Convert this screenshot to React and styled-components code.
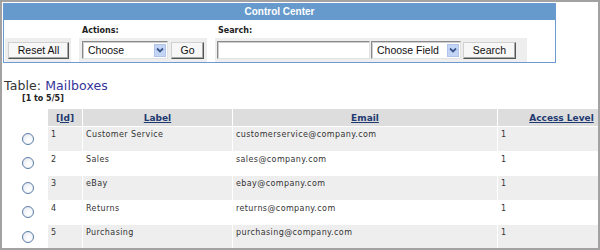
import React from "react";
import styled, { createGlobalStyle } from "styled-components";

const Global = createGlobalStyle`
  html, body { margin: 0; padding: 0; background: #fff; }
  body { font-family: "DejaVu Sans", Verdana, sans-serif; }
`;

const Frame = styled.div`
  width: 600px;
  height: 250px;
  box-sizing: border-box;
  border: 2px solid #a2a2a2;
  overflow: hidden;
  background: #fff;
  display: flex;
  flex-direction: column;
`;

const Panel = styled.div`
  margin: 1px 0 0 1px;
  width: 553px;
  box-sizing: border-box;
  border: 1px solid #6b9bd0;
  flex: none;
`;

const PanelHeader = styled.div`
  height: 16px;
  line-height: 16px;
  background: #6699cc;
  color: #fff;
  text-align: center;
  font-family: "Liberation Sans", Arial, sans-serif;
  font-weight: bold;
  font-size: 10px;
`;

const PanelBody = styled.div`
  display: flex;
  gap: 8px;
  padding-left: 1px;
`;

const Group = styled.div`
  display: flex;
  flex-direction: column;
`;

const GroupLabel = styled.div`
  height: 18px;
  box-sizing: border-box;
  padding: 6px 0 0 3px;
  line-height: 10px;
  font-size: 8px;
  font-weight: bold;
  color: #222;
`;

const GroupBox = styled.div`
  height: 24px;
  width: ${(p) => p.$w}px;
  box-sizing: border-box;
  background: #eeeeee;
  display: flex;
  align-items: center;
  padding-left: ${(p) => p.$pl}px;
  gap: ${(p) => p.$gap}px;
`;

const Button = styled.div`
  width: ${(p) => p.$w}px;
  height: 17px;
  box-sizing: border-box;
  flex: none;
  margin-left: ${(p) => p.$ml || 0}px;
  background: #f7f7f7;
  border: 1px solid;
  border-color: #d0d0d0 #555 #555 #d0d0d0;
  box-shadow: inset -1px -1px 0 #a8a8a8;
  font-family: "Liberation Sans", Arial, sans-serif;
  font-size: 10.5px;
  line-height: 15px;
  color: #111;
  text-align: center;
`;

const Field = styled.div`
  width: ${(p) => p.$w}px;
  height: 18px;
  box-sizing: border-box;
  flex: none;
  background: #fff;
  border: 1px solid;
  border-color: #8a8a8a #e2e2e2 #e2e2e2 #8a8a8a;
  box-shadow: inset 1px 1px 0 #cfcfcf;
  display: flex;
  align-items: center;
  padding-left: 5px;
  padding-right: 1px;
  font-family: "Liberation Sans", Arial, sans-serif;
  font-size: 10.5px;
  color: #111;
`;

const FieldText = styled.span`
  flex: 1;
`;

const ArrowBox = styled.span`
  width: 12px;
  height: 13px;
  box-sizing: border-box;
  background: #c3d4f4;
  border: 1px solid #b0c4ea;
  display: flex;
  align-items: center;
  justify-content: center;
`;

const Arrow = () => (
  <ArrowBox>
    <svg width="8" height="6" viewBox="0 0 8 6">
      <path d="M1 1.5 L4 4.5 L7 1.5" fill="none" stroke="#3a5590" strokeWidth="1.8" />
    </svg>
  </ArrowBox>
);

const Title = styled.div`
  margin: 16px 0 0 2px;
  font-size: 12.5px;
  line-height: 14px;
  color: #333;
  letter-spacing: 0.1px;
`;

const TitleName = styled.span`
  color: #333399;
`;

const Count = styled.div`
  margin: 1px 0 0 20px;
  font-size: 8px;
  font-weight: bold;
  line-height: 10px;
  color: #222;
`;

const Table = styled.table`
  margin-top: 4px;
  border-collapse: separate;
  border-spacing: 1px;
  table-layout: fixed;
  width: 624px;
  flex: none;
`;

const Col = styled.col`
  width: ${(p) => p.$w}px;
`;

const HeadRow = styled.tr`
  height: 17px;
`;

const Th = styled.th`
  padding: 0;
  background: ${(p) => (p.$blank ? "transparent" : "#dddddd")};
  text-align: center;
  vertical-align: middle;
  font-size: 9px;
  font-weight: bold;
  color: #1f3a70;
  text-decoration: underline;
  white-space: nowrap;
`;

const Row = styled.tr`
  height: 23.5px;
`;

const Td = styled.td`
  padding: 3px 3px 0 3px;
  vertical-align: top;
  background: ${(p) => (p.$alt ? "#eeeeee" : "#ffffff")};
  font-size: 8px;
  letter-spacing: 0.4px;
  color: #333;
  white-space: nowrap;
  overflow: hidden;
`;

const RadioCell = styled.td`
  padding: 0 0 0 19px;
  vertical-align: middle;
  background: #fff;
  line-height: 0;
`;

const Radio = styled.span`
  display: inline-block;
  width: 12px;
  height: 12px;
  box-sizing: border-box;
  border-radius: 50%;
  border: 1px solid #5a7ea8;
  background: radial-gradient(circle at 60% 65%, #ffffff 0%, #f4f6f9 45%, #d9e0ea 100%);
`;

const rows = [
  ["1", "Customer Service", "customerservice@company.com", "1"],
  ["2", "Sales", "sales@company.com", "1"],
  ["3", "eBay", "ebay@company.com", "1"],
  ["4", "Returns", "returns@company.com", "1"],
  ["5", "Purchasing", "purchasing@company.com", "1"],
];

export default function App() {
  return (
    <>
      <Global />
      <Frame>
        <Panel>
          <PanelHeader>Control Center</PanelHeader>
          <PanelBody>
            <Group>
              <GroupLabel />
              <GroupBox $w={66} $pl={3} $gap={0}>
                <Button $w={61}>Reset All</Button>
              </GroupBox>
            </Group>
            <Group>
              <GroupLabel>Actions:</GroupLabel>
              <GroupBox $w={128} $pl={3} $gap={3}>
                <Field $w={86}>
                  <FieldText>Choose</FieldText>
                  <Arrow />
                </Field>
                <Button $w={33}>Go</Button>
              </GroupBox>
            </Group>
            <Group>
              <GroupLabel>Search:</GroupLabel>
              <GroupBox $w={312} $pl={2} $gap={1}>
                <Field $w={153} />
                <Field $w={90}>
                  <FieldText>Choose Field</FieldText>
                  <Arrow />
                </Field>
                <Button $w={53} $ml={1}>Search</Button>
              </GroupBox>
            </Group>
          </PanelBody>
        </Panel>
        <Title>
          Table: <TitleName>Mailboxes</TitleName>
        </Title>
        <Count>[1 to 5/5]</Count>
        <Table>
          <colgroup>
            <Col $w={44} />
            <Col $w={34} />
            <Col $w={149} />
            <Col $w={264} />
            <Col $w={127} />
          </colgroup>
          <thead>
            <HeadRow>
              <Th $blank />
              <Th>[Id]</Th>
              <Th>Label</Th>
              <Th>Email</Th>
              <Th>Access Level</Th>
            </HeadRow>
          </thead>
          <tbody>
            {rows.map((r, i) => (
              <Row key={r[0]}>
                <RadioCell>
                  <Radio />
                </RadioCell>
                {r.map((c, j) => (
                  <Td key={j} $alt={i % 2 === 0}>
                    {c}
                  </Td>
                ))}
              </Row>
            ))}
          </tbody>
        </Table>
      </Frame>
    </>
  );
}
